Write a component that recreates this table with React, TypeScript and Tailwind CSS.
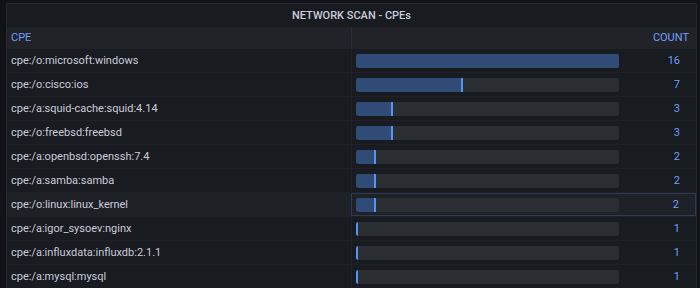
import React from 'react';

const rows = [
  { cpe: 'cpe:/o:microsoft:windows', count: 16 },
  { cpe: 'cpe:/o:cisco:ios', count: 7 },
  { cpe: 'cpe:/a:squid-cache:squid:4.14', count: 3 },
  { cpe: 'cpe:/o:freebsd:freebsd', count: 3 },
  { cpe: 'cpe:/a:openbsd:openssh:7.4', count: 2 },
  { cpe: 'cpe:/a:samba:samba', count: 2 },
  { cpe: 'cpe:/o:linux:linux_kernel', count: 2, hover: true },
  { cpe: 'cpe:/a:igor_sysoev:nginx', count: 1 },
  { cpe: 'cpe:/a:influxdata:influxdb:2.1.1', count: 1 },
  { cpe: 'cpe:/a:mysql:mysql', count: 1 },
];

const MIN = 1;
const MAX = 16;

function BarGauge({ value }: { value: number }) {
  const pct = ((value - MIN) / (MAX - MIN)) * 100;
  return (
    <div className="relative h-[14px] w-[263px] rounded-[2px] bg-[#2a2d32] overflow-hidden">
      <div
        className="absolute left-0 top-0 h-full bg-[#2f4b76] border-r-2 border-[#5794f2] rounded-l-[2px]"
        style={{ width: `calc(${pct}% + 2px)` }}
      />
    </div>
  );
}

export default function App() {
  return (
    <div
      className="h-[288px] w-[700px] overflow-hidden bg-[#111217] pl-[6px] pr-[3px] pt-[3px]"
      style={{ fontFamily: 'Roboto, "Noto Sans", sans-serif' }}
    >
      <div className="h-[300px] rounded-[2px] border border-[#25282d] bg-[#181b1f]">
        <div className="flex h-[23px] items-center justify-center pt-[1px] text-[11px] font-medium text-[#ccccdc]">
          NETWORK SCAN - CPEs
        </div>
        <div className="flex h-[22px] items-center bg-[#212328] text-[11px] text-[#6e9fff]">
          <div className="w-[344px] pl-[4px] pt-[1px]">CPE</div>
          <div className="flex h-full flex-1 items-center justify-end border-l border-[#2c2f35] pr-[7px] pt-[1px]">
            COUNT
          </div>
        </div>
        {rows.map((r) => (
          <div
            key={r.cpe}
            className={`flex h-[24px] items-center border-b border-[#1f2126] text-[11px] text-[#ccccdc] ${
              r.hover ? 'bg-[#1e2126]' : ''
            }`}
          >
            <div className="w-[344px] pl-[4px] pt-[1px]">{r.cpe}</div>
            <div
              className={`flex h-full flex-1 items-center border-l ${
                r.hover ? 'border border-[#2b3a58]' : 'border-[#1f2126]'
              } pl-[4px] pr-[16px]`}
            >
              <BarGauge value={r.count} />
              <div className="flex-1 pt-[1px] text-right text-[#6e9fff]">{r.count}</div>
            </div>
          </div>
        ))}
      </div>
    </div>
  );
}
